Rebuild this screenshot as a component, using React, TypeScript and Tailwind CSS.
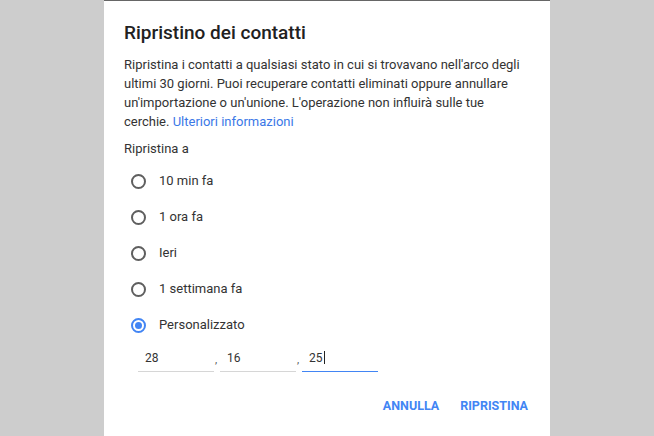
import { useState } from "react";

const options = ["10 min fa", "1 ora fa", "Ieri", "1 settimana fa", "Personalizzato"];

function Radio({ checked }: { checked: boolean }) {
  return (
    <span
      className={
        checked
          ? "flex h-[15px] w-[15px] items-center justify-center rounded-full border-2 border-[#4285f4]"
          : "flex h-[15px] w-[15px] items-center justify-center rounded-full border-2 border-[#5f5f5f]"
      }
    >
      {checked && <span className="h-[7px] w-[7px] rounded-full bg-[#4285f4]" />}
    </span>
  );
}

export default function App() {
  const [selected, setSelected] = useState(4);
  const fields = ["28", "16", "25"];

  return (
    <div
      className="flex h-[436px] w-full justify-center bg-[#cdcdcd]"
      style={{ fontFamily: "Roboto, 'Liberation Sans', sans-serif" }}
    >
      <div className="flex w-[446px] flex-col border-t border-[#666] bg-white pl-5 pr-[14px] pt-[20px]">
        <h1 className="text-[19px] font-medium leading-6 text-[#212121]">Ripristino dei contatti</h1>

        <p className="mt-[10px] pr-2 text-[13px] leading-[19px] text-[#333]">
          Ripristina i contatti a qualsiasi stato in cui si trovavano nell'arco degli ultimi 30 giorni. Puoi
          recuperare contatti eliminati oppure annullare un'importazione o un'unione. L'operazione non influirà
          sulle tue cerchie. <a className="text-[#3b78e7]">Ulteriori informazioni</a>
        </p>

        <div className="mt-[8px] text-[13px] leading-[20px] text-[#333]">Ripristina a</div>

        <ul className="mt-[4px] flex flex-col">
          {options.map((label, i) => (
            <li
              key={label}
              onClick={() => setSelected(i)}
              className="flex h-9 cursor-pointer items-center gap-[13px] pl-[7px] text-[13px] text-[#333]"
            >
              <Radio checked={selected === i} />
              <span>{label}</span>
            </li>
          ))}
        </ul>

        <div className="ml-[14px] mt-[1px] flex items-end">
          {fields.map((v, i) => (
            <div key={i} className="flex items-end">
              <div
                className={
                  i === 2
                    ? "flex h-[28px] w-[76px] items-center border-b border-[#4285f4] pl-[7px] text-[12px] text-[#333]"
                    : "flex h-[28px] w-[76px] items-center border-b border-[#d6d6d6] pl-[7px] text-[12px] text-[#333]"
                }
              >
                {v}
                {i === 2 && <span className="ml-[1px] h-[13px] w-px bg-[#222]" />}
              </div>
              {i < 2 && <span className="w-[6px] pb-[4px] pl-[1px] text-[11px] text-[#555]">,</span>}
            </div>
          ))}
        </div>

        <div className="mt-[16px] flex justify-end gap-[5px]">
          <button className="h-9 px-2 text-[12.5px] font-bold text-[#4285f4]">ANNULLA</button>
          <button className="h-9 px-2 text-[12.5px] font-bold text-[#4285f4]">RIPRISTINA</button>
        </div>
      </div>
    </div>
  );
}
